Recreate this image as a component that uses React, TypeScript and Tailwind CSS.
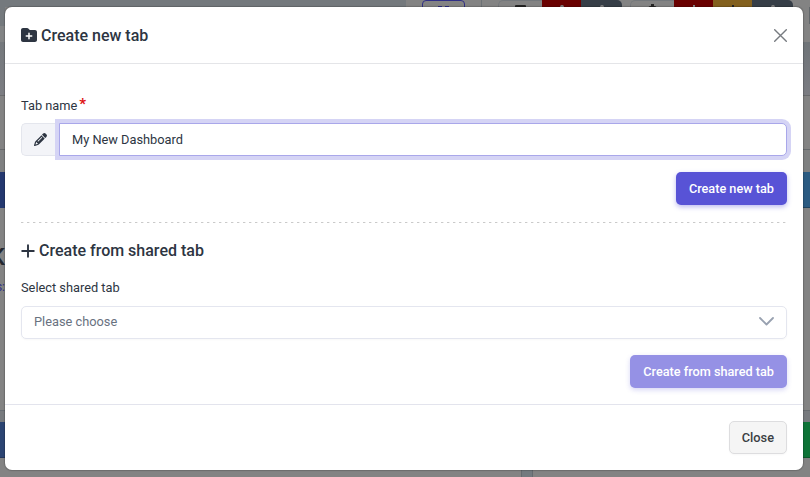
import type { ReactNode } from "react";
import { FaFolderPlus, FaPencil } from "react-icons/fa6";

function DimmedToolbar() {
  return (
    <div className="flex h-[7px] overflow-hidden bg-[#838383]">
      <div className="w-[406px] bg-[#74797d]" />
      <div className="ml-4 flex h-6 w-[43px] shrink-0 justify-center gap-[3px] rounded-[4px] border border-[#302f86] pt-[5px]">
        <i className="h-1 w-1 bg-[#302f86]" />
        <i className="h-1 w-1 bg-[#302f86]" />
      </div>
      <div className="ml-4 h-6 w-px bg-[#6c7175]" />
      <div className="ml-4 flex h-8 w-[124px] overflow-hidden rounded-[5px]">
        <div className="flex w-[44px] justify-center rounded-tl-[5px] border-t border-l border-[#73777b] pt-[4px]"><i className="h-3 w-[11px] rounded-[1px] bg-[#242424]" /></div>
        <div className="flex w-[39px] justify-center bg-[#690000] pt-[5px]"><i className="h-2 w-1 rounded bg-[#868686]" /></div>
        <div className="flex w-[41px] justify-center bg-[#363e47] pt-[5px]"><i className="h-2 w-1 rounded bg-[#868686]" /></div>
      </div>
      <div className="ml-2 flex h-8 w-[163px] overflow-hidden rounded-[5px]">
        <div className="flex w-[44px] items-start justify-center rounded-tl-[5px] border-t border-l border-[#73777b] pt-[3px]">
          <i className="mt-0.5 h-2 w-[3px] rounded-tl bg-[#242424]" />
          <i className="h-2 w-[3px] bg-[#242424]" />
          <i className="mt-0.5 h-2 w-[3px] rounded-tr bg-[#242424]" />
        </div>
        <div className="flex w-[39px] justify-center bg-[#690000] pt-[5px]"><i className="h-2 w-0.5 bg-[#868686]" /></div>
        <div className="flex w-[39px] justify-center bg-[#83601e] pt-[5px]"><i className="h-2 w-0.5 bg-[#242424]" /></div>
        <div className="flex w-[41px] justify-center bg-[#363e47] pt-[5px]"><i className="h-2 w-1 rounded bg-[#868686]" /></div>
      </div>
    </div>
  );
}

function DimmedPage() {
  return (
    <div className="flex h-full flex-col bg-[#838383]">
      <DimmedToolbar />
      <div className="flex h-[463px] justify-between">
        <div className="w-[5px] overflow-hidden">
          <div className="h-[19px] bg-[#74797d]" />
          <div className="h-4 bg-[#828485]" />
          <div className="h-[54px] border-b border-[#6b6c6e] bg-linear-to-b from-[#75797d] to-[#7c7d82]" />
          <div className="h-[54px] border-b border-[#686a6c]" />
          <div className="h-[22px] bg-[#7f8081]" />
          <div className="h-9 bg-[#24386f]" />
          <div className="flex h-[71px] items-center justify-end overflow-hidden pt-[26px] text-[24px] font-medium text-[#242830]">K</div>
          <div className="flex h-4 items-center justify-end text-[12px] text-[#302f86]">s:</div>
          <div className="h-[116px] border-b border-[#686e74]" />
          <div className="h-[11px] bg-[#777a7e]" />
          <div className="h-9 border-b border-[#24365c] bg-[#2b4472]" />
        </div>
        <div className="w-[7px]">
          <div className="flex h-[35px] justify-end"><div className="h-[17px] w-px bg-[#62676b]" /></div>
          <div className="h-[54px] border-b border-[#686a6c] bg-linear-to-b from-[#6f7478] to-[#7b7c82]" />
          <div className="h-[54px] border-b border-[#66696c]" />
          <div className="h-[22px] bg-[#7f8081]" />
          <div className="h-9 border-b border-[#20435f] bg-[#2b5b82]" />
          <div className="h-[203px] border-b border-[#686c70]" />
          <div className="h-[11px] bg-[#777a7e]" />
          <div className="h-9 border-b border-[#0c572b] bg-[#0d7337]" />
        </div>
      </div>
      <div className="flex flex-1">
        <div className="w-[521px]" />
        <div className="w-3 border-x border-[#656b70] bg-[#737a7f]" />
      </div>
    </div>
  );
}

function PrimaryButton({ children, disabled = false }: { children: ReactNode; disabled?: boolean }) {
  return (
    <button
      disabled={disabled}
      className={`h-[33px] rounded-[5px] px-[13px] text-[12.7px] font-medium whitespace-nowrap text-white ${
        disabled ? "bg-[#9591e5] shadow-[0_2px_5px_#5853d63d]" : "bg-[#5853d6] shadow-[0_2px_5px_#5853d666]"
      }`}
    >
      {children}
    </button>
  );
}

export default function App() {
  return (
    <div className="relative h-[477px] w-[810px] overflow-hidden font-['Roboto',sans-serif] text-[12.8px] text-[#2d3542]">
      <DimmedPage />
      <div role="dialog" className="absolute top-[7px] left-[5px] flex h-[463px] w-[798px] flex-col rounded-[7px] bg-white shadow-[0_0_1px_1px_#0000002e]">
        <header className="flex h-[57px] items-center justify-between border-b border-[#e4e5e8] px-4">
          <h2 className="flex items-center gap-1 text-[16px] font-medium">
            <FaFolderPlus size={16} />
            <span className="pt-px">Create new tab</span>
          </h2>
          <button aria-label="Close">
            <svg width="13" height="13" viewBox="0 0 13 13" fill="none" stroke="#777b80" strokeWidth="1.4" strokeLinecap="round">
              <path d="M.7.7 12.3 12.3M12.3.7.7 12.3" />
            </svg>
          </button>
        </header>
        <main className="h-[340px] px-4 pt-8">
          <label className="flex h-[19px] items-center">
            Tab name<span className="-mt-[3px] ml-0.5 text-[15px] leading-none font-bold text-[#de1111]">*</span>
          </label>
          <div className="mt-2 flex h-[33px]">
            <span className="flex w-[38px] items-center justify-center rounded-l-[5px] border border-r-0 border-[#e4e6ed] bg-[#f3f4f8]">
              <FaPencil size={13} />
            </span>
            <input
              defaultValue="My New Dashboard"
              className="min-w-0 flex-1 rounded-r-[5px] border border-[#a9a7ea] bg-white px-3 outline-none ring-4 ring-[#d5d4f5]"
            />
          </div>
          <div className="mt-4 flex justify-end"><PrimaryButton>Create new tab</PrimaryButton></div>
          <div className="mt-[17px] h-px bg-[repeating-linear-gradient(90deg,#cacaca_0_2px,#ececec_2px_3px,transparent_3px_6px)]" />
          <h2 className="mt-4 flex h-6 items-center gap-1 text-[16px] font-medium">
            <svg width="14" height="14" viewBox="0 0 14 14" fill="none" stroke="currentColor" strokeWidth="1.9" strokeLinecap="round">
              <path d="M7 1.2v11.6M1.2 7h11.6" />
            </svg>
            Create from shared tab
          </h2>
          <label className="mt-[15px] flex h-[19px] items-center">Select shared tab</label>
          <button className="mt-[9px] flex h-[33px] w-full items-center justify-between rounded-[5px] border border-[#e4e6ef] pr-3 pb-0.5 pl-3 text-left text-[#69727f] shadow-[0_1px_2px_#00000008]">
            Please choose
            <svg width="15" height="9" viewBox="0 0 15 9" fill="none" stroke="#98a1b0" strokeWidth="1.8" strokeLinecap="round" strokeLinejoin="round">
              <path d="m1 1 6.5 6.5L14 1" />
            </svg>
          </button>
          <div className="mt-4 flex justify-end"><PrimaryButton disabled>Create from shared tab</PrimaryButton></div>
        </main>
        <footer className="flex flex-1 items-center justify-end border-t border-[#e3e4ed] px-4">
          <button className="h-[33px] rounded-[5px] border border-[#dddddf] bg-[#f5f5f5] px-3 text-[12.8px] font-medium text-[#3b3e43] shadow-[0_1px_2px_#00000008]">Close</button>
        </footer>
      </div>
    </div>
  );
}
